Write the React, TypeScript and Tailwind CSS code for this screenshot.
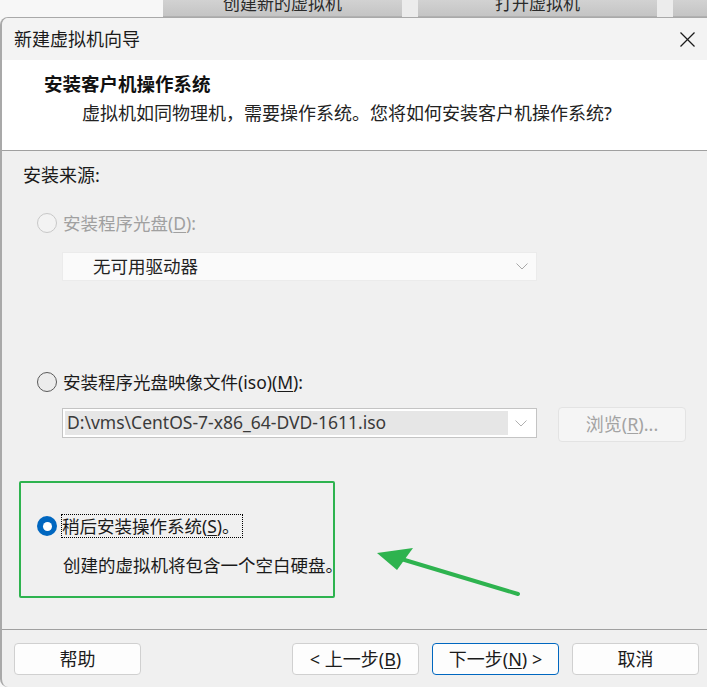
import React from "react";

const FONT = '"Noto Sans", "Noto Sans CJK SC", sans-serif';

function Chevron({ color = "#9c9c9c" }: { color?: string }) {
  return (
    <svg width="12" height="7" viewBox="0 0 12 7" className="shrink-0">
      <polyline points="0.5,0.5 6,6 11.5,0.5" fill="none" stroke={color} strokeWidth="1" />
    </svg>
  );
}

function Radio({ state }: { state: "disabled" | "off" | "on" }) {
  if (state === "on") {
    return (
      <span className="w-[20px] h-[20px] rounded-full bg-[#0067c0] flex items-center justify-center shrink-0">
        <span className="w-[9px] h-[9px] rounded-full bg-white" />
      </span>
    );
  }
  if (state === "disabled") {
    return <span className="w-[20px] h-[20px] rounded-full border border-[#c8c8c8] bg-[#f3f3f3] shrink-0" />;
  }
  return <span className="w-[20px] h-[20px] rounded-full border border-[#5a5a5a] bg-[#ececec] shrink-0" />;
}

function FooterButton({ children, primary }: { children: React.ReactNode; primary?: boolean }) {
  return (
    <div
      className={
        "w-[127px] h-[32px] rounded-[4px] bg-[#fdfdfd] flex items-center justify-center text-[18px] text-[#1b1b1b] " +
        (primary ? "border border-[#0067c0]" : "border border-[#d0d0d0]")
      }
    >
      {children}
    </div>
  );
}

export default function App() {
  return (
    <div className="relative w-[707px] h-[687px] overflow-hidden bg-[#f7f7f7]" style={{ fontFamily: FONT }}>
      {/* background application strip */}
      <div className="h-[17px] flex overflow-hidden">
        <div className="w-[163px]" />
        <div className="w-[239px] h-[17px] bg-gradient-to-b from-[#d2d2d2] to-[#c4c4c4] border-b border-[#b0b0b0] flex justify-center overflow-hidden">
          <span className="block text-[17px] leading-[17px] -mt-[5px] text-[#2a2a2a]">创建新的虚拟机</span>
        </div>
        <div className="w-[16px] bg-[#ececec]" />
        <div className="w-[239px] h-[17px] bg-gradient-to-b from-[#d2d2d2] to-[#c4c4c4] border-b border-[#b0b0b0] flex justify-center overflow-hidden">
          <span className="block text-[17px] leading-[17px] -mt-[5px] text-[#2a2a2a]">打开虚拟机</span>
        </div>
        <div className="w-[16px] bg-[#ececec]" />
        <div className="flex-1 h-[17px] bg-gradient-to-b from-[#d2d2d2] to-[#c4c4c4] border-b border-[#b0b0b0]" />
      </div>

      {/* dialog */}
      <div className="h-[670px] rounded-tl-[8px] rounded-bl-[8px] border-l-2 border-t border-[#a9a9a9] bg-[#f0f0f0] flex flex-col overflow-hidden">
        {/* title bar */}
        <div className="h-[42px] bg-[#f3f3f3] flex items-center justify-between pl-[12px] pr-[12px] shrink-0">
          <span className="text-[18px] text-[#1a1a1a] leading-none">新建虚拟机向导</span>
          <svg width="15" height="15" viewBox="0 0 15 15">
            <line x1="0.5" y1="0.5" x2="14.5" y2="14.5" stroke="#1a1a1a" strokeWidth="1.2" />
            <line x1="14.5" y1="0.5" x2="0.5" y2="14.5" stroke="#1a1a1a" strokeWidth="1.2" />
          </svg>
        </div>

        {/* header */}
        <div className="h-[91px] bg-white border-b border-[#a0a0a0] shrink-0 flex flex-col">
          <div className="pl-[42px] pt-[12px] h-[24px] box-content leading-[24px] text-[18.5px] font-bold text-[#111]">
            安装客户机操作系统
          </div>
          <div className="pl-[80px] pt-[5px] leading-[24px] text-[18px] text-[#222]">
            虚拟机如同物理机，需要操作系统。您将如何安装客户机操作系统?
          </div>
        </div>

        {/* content */}
        <div className="h-[478px] shrink-0 flex flex-col text-[17.5px]">
          <div className="pl-[21px] pt-[12px] h-[24px] box-content leading-[24px] text-[#1a1a1a] text-[18px]">安装来源:</div>

          <div className="mt-[24px] h-[24px] pl-[35px] flex items-center gap-[6px] text-[#a0a0a0]">
            <Radio state="disabled" />
            <span className="leading-[24px]">
              安装程序光盘(<span className="underline underline-offset-2">D</span>):
            </span>
          </div>

          <div className="mt-[17px] ml-[60px] w-[475px] h-[29px] bg-[#fafafa] border border-[#ebebeb] flex items-center justify-between pl-[30px] pr-[8px]">
            <span className="text-[#222] leading-none">无可用驱动器</span>
            <Chevron color="#a8a8a8" />
          </div>

          <div className="mt-[89px] h-[24px] pl-[35px] flex items-center gap-[6px] text-[#1a1a1a]">
            <Radio state="off" />
            <span className="leading-[24px]">
              安装程序光盘映像文件(iso)(<span className="underline underline-offset-2">M</span>):
            </span>
          </div>

          <div className="mt-[13px] h-[35px] flex items-start">
            <div className="mt-[1px] ml-[60px] w-[475px] h-[30px] bg-white border border-[#c4c4c4] flex items-center p-[2px]">
              <div className="h-full w-[443px] bg-[#e6e6e6] flex items-center pl-[2px] text-[17.5px] text-[#3a3a3a] leading-none">
                D:\vms\CentOS-7-x86_64-DVD-1611.iso
              </div>
              <div className="flex-1 flex items-center justify-center">
                <Chevron color="#b0b0b0" />
              </div>
            </div>
            <div className="ml-[21px] w-[128px] h-[35px] rounded-[4px] bg-[#f5f5f5] border border-[#e3e3e3] flex items-center justify-center text-[18px] text-[#a3a3a3]">
              浏览(<span className="underline underline-offset-2">R</span>)...
            </div>
          </div>

          <div className="mt-[72px] h-[24px] pl-[35px] flex items-center gap-[4px] text-[#1a1a1a]">
            <Radio state="on" />
            <span className="h-[24px] leading-[22px] border border-dotted border-black pr-[2px]">
              稍后安装操作系统(<span className="underline underline-offset-2">S</span>)。
            </span>
          </div>

          <div className="mt-[15px] pl-[61px] h-[24px] leading-[24px] text-[#1a1a1a]">
            创建的虚拟机将包含一个空白硬盘。
          </div>
        </div>

        {/* footer */}
        <div className="flex-1 border-t border-[#a0a0a0] flex items-start pt-[13px] pl-[12px]">
          <FooterButton>帮助</FooterButton>
          <div className="ml-[151px]">
            <FooterButton>
              &lt; 上一步(<span className="underline underline-offset-2">B</span>)
            </FooterButton>
          </div>
          <div className="ml-[13px]">
            <FooterButton primary>
              下一步(<span className="underline underline-offset-2">N</span>) &gt;
            </FooterButton>
          </div>
          <div className="ml-[13px]">
            <FooterButton>取消</FooterButton>
          </div>
        </div>
      </div>

      {/* annotation: green rectangle */}
      <div className="absolute left-[19px] top-[481px] w-[316px] h-[117px] border-2 border-[#2eb34f] rounded-[2px] pointer-events-none" />

      {/* annotation: green arrow */}
      <svg className="absolute left-0 top-0 pointer-events-none" width="707" height="687" viewBox="0 0 707 687">
        <line x1="518" y1="594" x2="398" y2="558" stroke="#2eb34f" strokeWidth="4" strokeLinecap="round" />
        <polygon points="377,553 413,548 397,570" fill="#2eb34f" />
      </svg>
    </div>
  );
}
